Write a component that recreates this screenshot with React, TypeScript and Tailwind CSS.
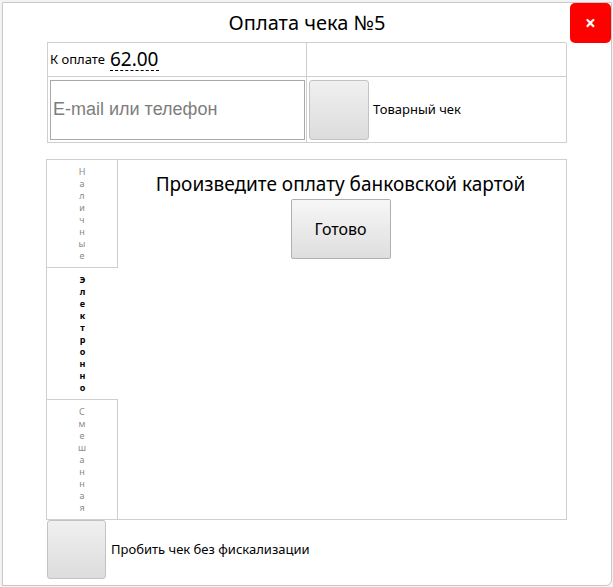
import React from "react";

// вертикальные подписи вкладок — по букве в строке
const tabs = [
  { label: "Наличные", cls: "pt-[6px] pb-[5px] border-r border-b border-[#cfcfcf] text-[#8a8a8a]" },
  { label: "Электронно", cls: "pt-[6px] pb-[5px] font-bold text-black" },
  { label: "Смешанная", cls: "pt-[6px] pb-[6px] border-t border-r border-[#cfcfcf] text-[#8a8a8a]" },
];

const boxBtn =
  "rounded-[3px] border border-[#c3c3c3] bg-gradient-to-b from-[#f0f0f0] to-[#dcdcdc]";

export default function App() {
  return (
    <div className="h-[587px] w-[613px] bg-[#f3f3f3] p-[2px] font-['Noto_Sans',sans-serif] text-black">
      <div className="relative flex h-[584px] w-[610px] flex-col rounded-br-[6px] border border-[#c8c8c8] bg-white">
        <div className="flex h-[39px] items-center justify-center text-[20px] leading-none">
          Оплата чека №5
        </div>
        <button className="absolute right-0 top-0 flex h-[40px] w-[41px] items-center justify-center rounded-[5px] bg-[#ff0000] text-[19px] font-bold leading-none text-white">
          ×
        </button>

        {/* верхняя таблица */}
        <div className="ml-[44px] grid w-[519px] grid-cols-[259px_260px] border-t border-l border-[#cfcfcf]">
          <div className="flex h-[34px] items-center border-r border-b border-[#cfcfcf] pl-[2px]">
            <span className="text-[13px]">К оплате</span>
            <span className="ml-[5px] border-b border-dashed border-black text-[19px] leading-[22px]">
              62.00
            </span>
          </div>
          <div className="h-[34px] border-r border-b border-[#cfcfcf]" />
          <div className="flex h-[66px] items-center border-r border-b border-[#cfcfcf] pl-[2px]">
            <input
              placeholder="E-mail или телефон"
              className="h-[60px] w-[255px] border border-[#a9a9a9] px-[2px] font-['Liberation_Sans',sans-serif] text-[18px] outline-none placeholder:text-[#7d7d7d]"
            />
          </div>
          <div className="flex h-[66px] items-center border-r border-b border-[#cfcfcf] pl-[2px]">
            <div className={`h-[60px] w-[60px] ${boxBtn}`} />
            <span className="ml-[4px] text-[13px]">Товарный чек</span>
          </div>
        </div>

        {/* вкладки способа оплаты */}
        <div className="ml-[43px] mt-[16px] flex h-[361px] w-[521px] border border-[#cfcfcf]">
          <div className="flex w-[71px] flex-col">
            {tabs.map((t) => (
              <div
                key={t.label}
                className={`flex flex-col items-center text-[9px] leading-[12px] ${t.cls}`}
              >
                {t.label.split("").map((ch, i) => (
                  <span key={i}>{ch}</span>
                ))}
              </div>
            ))}
          </div>
          <div className="flex flex-1 flex-col items-center pr-[3px]">
            <div className="mt-[12px] text-[19px] leading-[24px]">
              Произведите оплату банковской картой
            </div>
            <button className="mt-[3px] h-[60px] w-[100px] rounded-[2px] border border-[#b0b0b0] bg-gradient-to-b from-[#f7f7f7] to-[#dedede] text-[16px]">
              Готово
            </button>
          </div>
        </div>

        <div className="ml-[44px] flex items-center">
          <div className={`h-[59px] w-[59px] ${boxBtn}`} />
          <span className="ml-[5px] text-[13px]">Пробить чек без фискализации</span>
        </div>
      </div>
    </div>
  );
}
